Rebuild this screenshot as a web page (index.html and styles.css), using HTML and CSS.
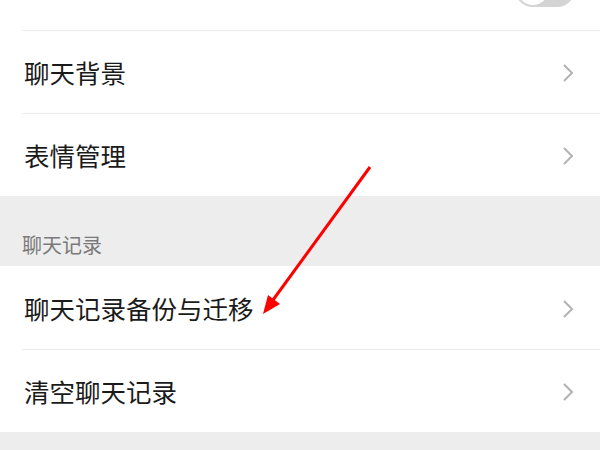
FILE: index.html
```html
<!DOCTYPE html>
<html lang="zh-CN">
<head>
  <meta charset="UTF-8" />
  <meta name="viewport" content="width=device-width, initial-scale=1.0" />
  <title>聊天</title>
  <link rel="stylesheet" href="styles.css">
</head>
<body>
  <div class="screen">
    <div class="list">
      <!-- Первая группа настроек -->
      <div class="group">
        <div class="row row-top">
          <div class="row-inner">
            <span class="label">回车键发送消息</span>
            <span class="switch"><span class="knob"></span></span>
          </div>
        </div>
        <div class="row">
          <div class="row-inner">
            <span class="label">聊天背景</span>
            <svg class="chevron" viewBox="0 0 12 20"><path d="M2 2 L10 10 L2 18" /></svg>
          </div>
        </div>
        <div class="row">
          <div class="row-inner">
            <span class="label">表情管理</span>
            <svg class="chevron" viewBox="0 0 12 20"><path d="M2 2 L10 10 L2 18" /></svg>
          </div>
        </div>
      </div>

      <div class="group-title">聊天记录</div>

      <!-- Вторая группа -->
      <div class="group">
        <div class="row">
          <div class="row-inner">
            <span class="label">聊天记录备份与迁移</span>
            <svg class="chevron" viewBox="0 0 12 20"><path d="M2 2 L10 10 L2 18" /></svg>
          </div>
        </div>
        <div class="row">
          <div class="row-inner">
            <span class="label">清空聊天记录</span>
            <svg class="chevron" viewBox="0 0 12 20"><path d="M2 2 L10 10 L2 18" /></svg>
          </div>
        </div>
      </div>
    </div>

    <!-- Красная стрелка поверх скриншота -->
    <svg class="pointer" viewBox="0 0 600 450">
      <line x1="370" y1="167" x2="273" y2="300" />
      <polygon points="263,314 268,295 280,304" />
    </svg>
  </div>
</body>
</html>
```

FILE: styles.css
```css
:root {
  --bg-color: #ededed;
  --text-color: #1a1a1a;
  --line-color: #ececec;
  --arrow-color: #b2b2b2;
}
* {
  box-sizing: border-box;
}
body {
  margin: 0;
  font-family: "Noto Sans CJK SC", "Noto Sans", sans-serif;
  background: var(--bg-color);
  color: var(--text-color);
  overflow: hidden;
}
.screen {
  position: relative;
  height: 450px;
  overflow: hidden;
}
/* первая строка обрезана сверху */
.list {
  margin-top: -53px;
}
.group {
  background: #fff;
}
.row {
  padding-left: 22px;
}
.row-inner {
  height: 83px;
  display: flex;
  align-items: center;
  justify-content: space-between;
  padding-right: 26px;
}
.row + .row .row-inner {
  border-top: 1px solid var(--line-color);
}
.label {
  font-size: 25.5px;
  line-height: 1;
  margin-left: 2px;
}
.row-top .label {
  margin-bottom: 8px;
}
.chevron {
  width: 12px;
  height: 20px;
  fill: none;
  stroke: var(--arrow-color);
  stroke-width: 2;
  margin-top: 2px;
}
/* Переключатель (выключен) */
.switch {
  width: 60px;
  height: 36px;
  border-radius: 18px;
  background: #d4d4d4;
  margin-right: -1px;
  padding: 2px;
  display: flex;
}
.knob {
  width: 32px;
  height: 32px;
  border-radius: 50%;
  background: #fff;
}
.group-title {
  height: 70px;
  padding: 34px 0 0 22px;
  font-size: 20px;
  color: #7a7a7a;
}
.pointer {
  position: absolute;
  left: 0;
  top: 0;
  width: 600px;
  height: 450px;
}
.pointer line {
  stroke: #ff0000;
  stroke-width: 3;
}
.pointer polygon {
  fill: #ff0000;
}
```
